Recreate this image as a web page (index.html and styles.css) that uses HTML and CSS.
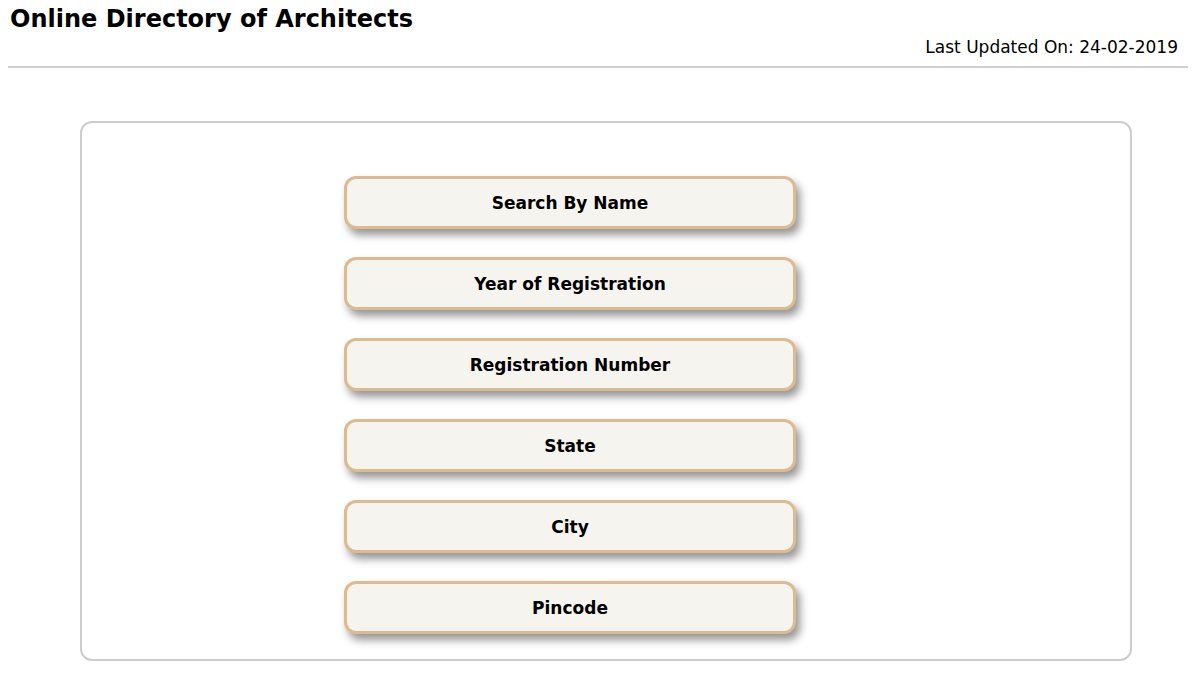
FILE: index.html
```html
<!DOCTYPE html>
<html>
<head>
<meta charset="utf-8">
<link rel="stylesheet" href="styles.css">
</head>
<body>
<header class="header">
  <h1 class="title">Online Directory of Architects</h1>
  <div class="updated">Last Updated On: 24-02-2019</div>
</header>
<main class="panel">
  <div class="menu">
    <button class="btn">Search By Name</button>
    <button class="btn">Year of Registration</button>
    <button class="btn">Registration Number</button>
    <button class="btn">State</button>
    <button class="btn">City</button>
    <button class="btn">Pincode</button>
  </div>
</main>
</body>
</html>
```
FILE: styles.css
```css
html, body { margin: 0; padding: 0; background: #fff; }
body { font-family: "DejaVu Sans", Verdana, sans-serif; color: #000; padding: 0 12px 0 8px; }
.header { border-bottom: 2px solid #d0d0d0; padding-top: 4px; height: 68px; box-sizing: border-box; display: flex; flex-direction: column; }
.title { margin: 0 0 0 2px; font-size: 24px; font-weight: bold; line-height: 30px; }
.updated { align-self: flex-end; font-size: 17px; margin-right: 10px; margin-top: 2px; line-height: 22px; }
.panel { margin: 53px 56px 0 72px; border: 2px solid #cccccc; border-radius: 12px; height: 540px; box-sizing: border-box; display: flex; justify-content: center; }
.menu { display: flex; flex-direction: column; gap: 28px; padding-top: 53px; margin-left: -72px; }
.btn { width: 452px; height: 53px; box-sizing: border-box; border: 3px solid #ddbb90; border-radius: 12px; background: #f6f4ef; font-family: "DejaVu Sans", Verdana, sans-serif; font-weight: bold; font-size: 17px; color: #000; box-shadow: 4px 6px 8px rgba(0,0,0,0.42); cursor: pointer; padding: 0; }
```
